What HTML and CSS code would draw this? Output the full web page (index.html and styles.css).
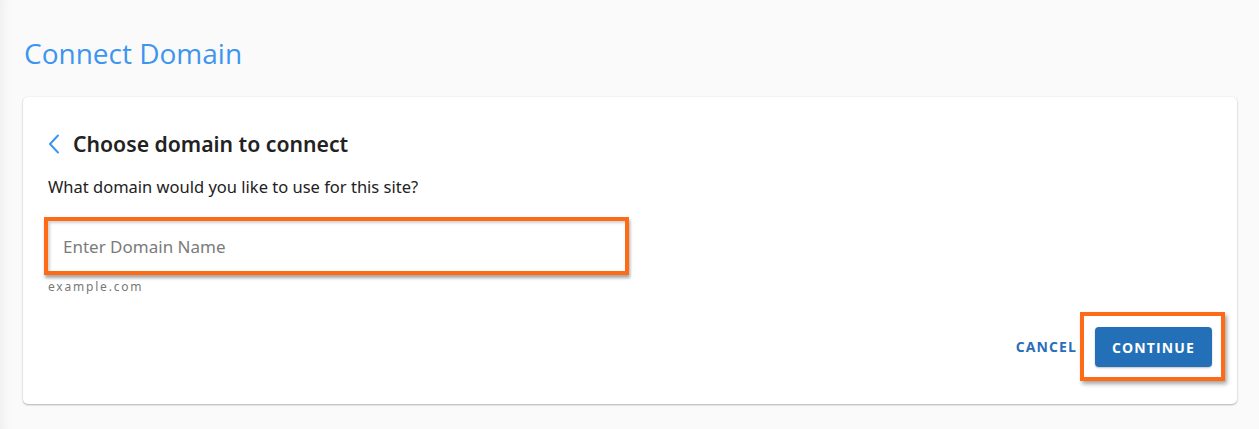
FILE: index.html
```html
<!DOCTYPE html>
<html lang="en">
<head>
<meta charset="utf-8">
<title>Connect Domain</title>
<link rel="stylesheet" href="styles.css">
</head>
<body>
<div class="page">
  <h1 class="page-title">Connect Domain</h1>
  <section class="card">
    <div class="card-head">
      <svg class="back" width="14" height="20" viewBox="0 0 14 20" aria-hidden="true">
        <path d="M11 1.5 L3 10 L11 18.5" fill="none" stroke="#3d95ef" stroke-width="2" stroke-linecap="round" stroke-linejoin="round"/>
      </svg>
      <h2 class="card-title">Choose domain to connect</h2>
    </div>
    <p class="question">What domain would you like to use for this site?</p>
    <div class="highlight input-hl">
      <input class="domain-input" type="text" placeholder="Enter Domain Name">
    </div>
    <div class="hint">example.com</div>
    <div class="actions">
      <button class="btn-cancel" type="button">CANCEL</button>
      <div class="highlight btn-hl">
        <button class="btn-continue" type="button">CONTINUE</button>
      </div>
    </div>
  </section>
</div>
</body>
</html>
```

FILE: styles.css
```css
* { box-sizing: border-box; }
html, body {
  margin: 0;
  padding: 0;
  background: #fafafa;
  font-family: "Noto Sans", "Open Sans", sans-serif;
}
body {
  box-shadow: inset 14px 0 14px -12px rgba(0,0,0,0.06);
  min-height: 429px;
}
.page {
  padding: 34px 22px 0 23px;
}
.page-title {
  margin: 0 0 0 1px;
  font-family: "Open Sans", sans-serif;
  font-size: 28px;
  line-height: 38px;
  font-weight: 400;
  color: #3d95ef;
}
.card {
  margin-top: 25px;
  background: #fff;
  border-radius: 5px;
  box-shadow: 0 1px 2px rgba(0,0,0,0.28), 0 0 3px rgba(0,0,0,0.05);
  padding: 32px 25px 35px 25px;
  height: 307px;
}
.card-head {
  display: flex;
  align-items: center;
  gap: 12px;
  height: 30px;
}
.back { display: block; margin-left: -1px; }
.card-title {
  margin: 0;
  font-size: 21.2px;
  line-height: 28px;
  font-weight: 600;
  color: #222;
}
.question {
  margin: 17px 0 0 0;
  font-size: 16.5px;
  line-height: 22px;
  color: #222;
}
.highlight {
  border: 4px solid #ff6a16;
  box-shadow: 2px 3px 4px rgba(0,0,0,0.35);
}
.input-hl {
  margin: 19px 0 0 -4px;
  width: 585px;
  height: 58px;
  box-shadow: 1px 3px 3px rgba(0,0,0,0.35), inset 2px 2px 3px rgba(0,0,0,0.18);
}
.domain-input {
  display: block;
  width: 100%;
  height: 100%;
  border: none;
  outline: none;
  background: transparent;
  padding: 0 0 0 15px;
  font-family: inherit;
  font-size: 17px;
  color: #333;
}
.domain-input::placeholder { color: #7b7b7b; }
.hint {
  margin-top: 4px;
  font-size: 12px;
  line-height: 16px;
  letter-spacing: 1.8px;
  color: #777;
}
.actions {
  display: flex;
  justify-content: flex-end;
  align-items: center;
  gap: 3px;
  margin-top: 17px;
  margin-right: -13px;
}
.btn-cancel {
  border: none;
  background: none;
  padding: 0;
  font-family: "Open Sans", sans-serif;
  font-size: 14px;
  font-weight: 700;
  letter-spacing: 1.1px;
  color: #2a6dba;
  cursor: pointer;
}
.btn-hl {
  padding: 11px 9px 9px 11px;
  width: 145px;
  height: 69px;
}
.btn-continue {
  display: block;
  width: 117px;
  height: 40px;
  border: none;
  border-radius: 4px;
  background: #2470b8;
  color: #fff;
  font-family: "Open Sans", sans-serif;
  font-size: 14px;
  font-weight: 700;
  letter-spacing: 1.1px;
  box-shadow: 0 1px 2px rgba(0,0,0,0.25);
  cursor: pointer;
}
```
